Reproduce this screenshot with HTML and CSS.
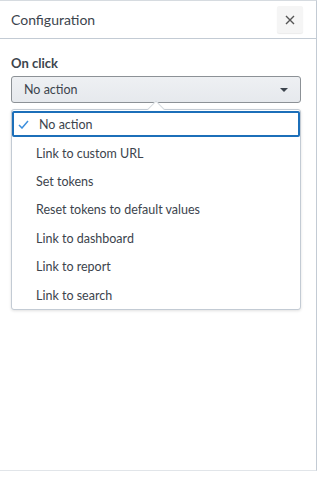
FILE: index.html
```html
<!DOCTYPE html>
<html lang="en">
<head>
  <meta charset="UTF-8" />
  <title>Configuration</title>
  <link rel="stylesheet" href="styles.css">
</head>
<body>
  <div class="panel">
    <div class="panel-header">
      <h1>Configuration</h1>
      <button class="close-btn" aria-label="Close">
        <svg width="10" height="10" viewBox="0 0 10 10"><path d="M1 1L9 9M9 1L1 9" stroke="#555" stroke-width="1.4" fill="none"/></svg>
      </button>
    </div>

    <div class="panel-body">
      <label class="field-label">On click</label>
      <div class="select">
        <span>No action</span>
        <span class="caret"></span>
      </div>

      <div class="menu">
        <span class="menu-arrow"></span>
        <ul class="menu-list">
          <li class="selected">
            <svg class="check" width="11" height="9" viewBox="0 0 11 9"><path d="M1 5L4 8L10 1" stroke="#3c8fdd" stroke-width="1.5" fill="none"/></svg>
            No action
          </li>
          <li>Link to custom URL</li>
          <li>Set tokens</li>
          <li>Reset tokens to default values</li>
          <li>Link to dashboard</li>
          <li>Link to report</li>
          <li>Link to search</li>
        </ul>
      </div>
    </div>
  </div>
</body>
</html>
```

FILE: styles.css
```css
* {
  box-sizing: border-box;
  margin: 0;
  padding: 0;
}
body {
  font-family: Lato, "Open Sans", sans-serif;
  background: #fff;
  color: #3c444d;
  width: 318px;
  height: 478px;
  overflow: hidden;
}
.panel {
  width: 317px;
  height: 471px;
  border-right: 1px solid #c3cbd4;
  border-bottom: 1px solid #e1e5e9;
  border-top: 1px solid #d6dbe0;
  background: #fff;
}
.panel-header {
  height: 38px;
  border-bottom: 1px solid #c3cbd4;
  display: flex;
  align-items: center;
  justify-content: space-between;
  padding: 0 13px 0 11px;
}
.panel-header h1 {
  font-size: 14px;
  font-weight: normal;
  color: #3c444d;
}
.close-btn {
  width: 26px;
  height: 27px;
  border: none;
  background: #f5f5f5;
  border-radius: 2px;
  box-shadow: 0 1px 1px rgba(0,0,0,0.08);
  display: flex;
  align-items: center;
  justify-content: center;
}
.panel-body {
  padding: 16px 15px 0 11px;
}
.field-label {
  display: block;
  font-size: 13px;
  font-weight: bold;
  color: #3c444d;
  margin-bottom: 5px;
}
.select {
  height: 27px;
  border: 1px solid #8c9196;
  border-radius: 3px;
  background: linear-gradient(#eef0f3, #e6e9ed);
  display: flex;
  align-items: center;
  justify-content: space-between;
  padding: 0 12px 0 12px;
  font-size: 12.5px;
  color: #3c444d;
}
.caret {
  width: 0;
  height: 0;
  border-left: 4px solid transparent;
  border-right: 4px solid transparent;
  border-top: 4px solid #3c444d;
}
.menu {
  position: relative;
  margin-top: 6px;
  border: 1px solid #c3cbd4;
  border-radius: 3px;
  background: #fff;
  box-shadow: 0 1px 3px rgba(0,0,0,0.12);
  padding: 1px 0 0 0;
}
.menu-arrow {
  position: absolute;
  left: 138px;
  top: -7px;
  width: 12px;
  height: 12px;
  background: #fff;
  border-left: 1px solid #d6dbe0;
  border-top: 1px solid #d6dbe0;
  transform: rotate(45deg);
}
.menu-list {
  list-style: none;
  position: relative;
}
.menu-list li {
  height: 28.4px;
  display: flex;
  align-items: center;
  padding-left: 24px;
  font-size: 12.5px;
  color: #3c444d;
}
.menu-list li.selected {
  height: 26px;
  border: 2px solid #1c6fb9;
  border-radius: 2px;
  padding-left: 4px;
  margin-bottom: 2px;
}
.check {
  margin-right: 10px;
}
```
